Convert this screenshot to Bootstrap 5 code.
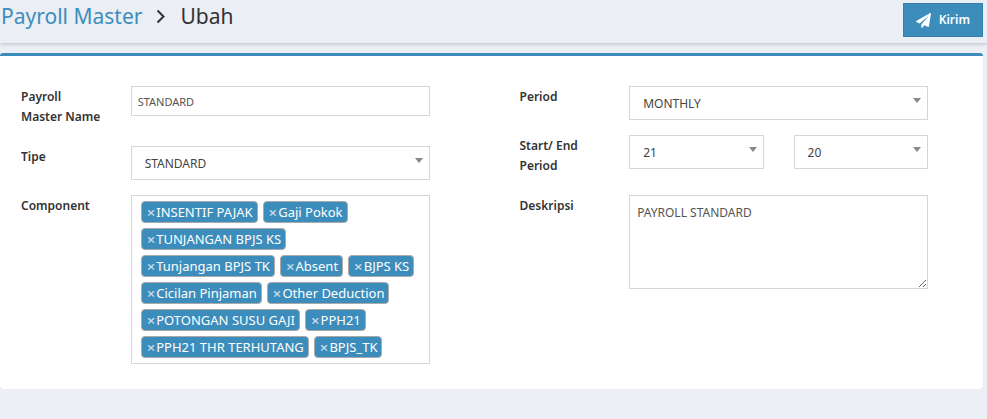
<!DOCTYPE html>
<html lang="id">
<head>
<meta charset="utf-8">
<meta name="viewport" content="width=device-width, initial-scale=1">
<title>Payroll Master - Ubah</title>
<link href="https://cdn.jsdelivr.net/npm/bootstrap@5.3.0/dist/css/bootstrap.min.css" rel="stylesheet">
<style>
:root { --brand: #3c8dbc; --brand-dark: #367fa9; --line: #d2d6de; }
body { background: #ecf0f5; color: #333; font-family: "Source Sans Pro", "Noto Sans", sans-serif; font-size: 12px; line-height: 20px; }
.page-head { background: #ebeef4; height: 43px; padding: 0 4px 0 1px; box-shadow: 0 1px 4px rgba(0, 0, 0, .2); }
.crumbs { font-size: 21px; line-height: 32px; gap: 14px; }
.crumbs a { color: var(--brand); }
.btn-send { --bs-btn-color: #fff; --bs-btn-bg: var(--brand); --bs-btn-border-color: var(--brand-dark); --bs-btn-hover-color: #fff; --bs-btn-hover-bg: var(--brand-dark); --bs-btn-border-radius: 0; --bs-btn-padding-x: 12px; --bs-btn-padding-y: 6px; --bs-btn-font-size: 12px; height: 34px; margin-top: 3px; font-weight: 600; line-height: 20px; }
.panel { background: #fff; border-top: 3px solid var(--brand); border-radius: 3px; box-shadow: 0 1px 1px rgba(0, 0, 0, .1); margin: 10px 4px 0 0; padding: 30px 55px 25px 21px; }
.halves { --bs-gutter-x: 90px; }
.field { --bs-gutter-x: 30px; margin-bottom: 15px; }
.field:last-child { margin-bottom: 0; }
.field label { font-weight: 600; padding-top: 1px; margin-bottom: 4px; }
.panel .form-control, .panel .form-select { border: 1px solid var(--line); border-radius: 0; color: #444; font-size: 12px; line-height: 20px; }
.panel input.form-control { height: 30px; padding: 4px 6px; font-size: 11px; color: #555; }
.panel .form-select { height: 34px; padding: 7px 24px 5px 13px; background: #fff url("data:image/svg+xml,%3Csvg xmlns='http://www.w3.org/2000/svg' viewBox='0 0 8 5'%3E%3Cpath fill='%23888' d='M0 0h8L4 5z'/%3E%3C/svg%3E") no-repeat right 6px top 11px / 8px 5px; }
.panel textarea.form-control { height: 94px; min-height: 94px; padding: 7px; color: #555; }
.tags { border: 1px solid var(--line); gap: 5px; padding: 5px 6px 5px 9px; }
.tag { background: var(--brand); border: 1px solid #aaa; border-radius: 4px; color: #fff; height: 22px; padding: 0 4px 0 5px; font-size: 13px; }
.tag button { background: none; border: 0; color: rgba(255, 255, 255, .7); font-size: 15px; font-weight: 600; padding: 0; margin-right: 1px; line-height: 18px; }
.tag-search { border: 0; outline: 0; width: 10px; padding: 0; }
</style>
</head>
<body>
<header class="page-head d-flex justify-content-between align-items-start position-relative">
  <nav class="crumbs d-flex align-items-center" aria-label="breadcrumb">
    <a href="#" class="text-decoration-none">Payroll Master</a>
    <svg width="10" height="16" viewBox="0 0 10 16" fill="none" stroke="#333" stroke-width="2" aria-hidden="true"><path d="M1.500 2.500 7.500 8.500l-6 6"/></svg>
    <span>Ubah</span>
  </nav>
  <button type="submit" form="payroll" class="btn btn-send d-flex align-items-center gap-2">
    <svg width="15" height="15" viewBox="0 0 1792 1792" fill="#fff" aria-hidden="true"><path d="M1764 11q33 24 27 64l-256 1536q-5 29-32 45-14 8-31 8-11 0-24-5l-453-185-242 295q-18 23-49 23-13 0-22-4-19-7-30.500-23.500t-11.500-36.500v-349l864-1059-1069 925-395-162q-37-14-40-55-2-40 32-59l1664-960q15-9 32-9 20 0 36 11z"/></svg>
    Kirim
  </button>
</header>
<main>
  <form id="payroll" class="panel">
    <div class="row halves">
      <div class="col-6">
        <div class="row field">
          <label class="col-3" for="name">Payroll Master&nbsp;Name</label>
          <div class="col-9"><input id="name" type="text" class="form-control" value="STANDARD"></div>
        </div>
        <div class="row field">
          <label class="col-3" for="type">Tipe</label>
          <div class="col-9"><select id="type" class="form-select"><option>STANDARD</option></select></div>
        </div>
        <div class="row field">
          <label class="col-3" for="component">Component</label>
          <div class="col-9">
            <div class="tags d-flex flex-wrap">
              <span class="tag d-flex"><button type="button" aria-label="Remove">×</button>INSENTIF PAJAK</span>
              <span class="tag d-flex"><button type="button" aria-label="Remove">×</button>Gaji Pokok</span>
              <span class="tag d-flex"><button type="button" aria-label="Remove">×</button>TUNJANGAN BPJS KS</span>
              <span class="tag d-flex"><button type="button" aria-label="Remove">×</button>Tunjangan BPJS TK</span>
              <span class="tag d-flex"><button type="button" aria-label="Remove">×</button>Absent</span>
              <span class="tag d-flex"><button type="button" aria-label="Remove">×</button>BJPS KS</span>
              <span class="tag d-flex"><button type="button" aria-label="Remove">×</button>Cicilan Pinjaman</span>
              <span class="tag d-flex"><button type="button" aria-label="Remove">×</button>Other Deduction</span>
              <span class="tag d-flex"><button type="button" aria-label="Remove">×</button>POTONGAN SUSU GAJI</span>
              <span class="tag d-flex"><button type="button" aria-label="Remove">×</button>PPH21</span>
              <span class="tag d-flex"><button type="button" aria-label="Remove">×</button>PPH21 THR TERHUTANG</span>
              <span class="tag d-flex"><button type="button" aria-label="Remove">×</button>BPJS_TK</span>
              <input id="component" type="text" class="tag-search">
            </div>
          </div>
        </div>
      </div>
      <div class="col-6">
        <div class="row field">
          <label class="col-3" for="period">Period</label>
          <div class="col-9"><select id="period" class="form-select"><option>MONTHLY</option></select></div>
        </div>
        <div class="row field">
          <label class="col-3" for="start">Start/ End Period</label>
          <div class="col-9">
            <div class="row field">
              <div class="col-6"><select id="start" class="form-select"><option>21</option></select></div>
              <div class="col-6"><select id="end" class="form-select" aria-label="End period"><option>20</option></select></div>
            </div>
          </div>
        </div>
        <div class="row field">
          <label class="col-3" for="description">Deskripsi</label>
          <div class="col-9"><textarea id="description" class="form-control">PAYROLL STANDARD</textarea></div>
        </div>
      </div>
    </div>
  </form>
</main>
<script src="https://cdn.jsdelivr.net/npm/bootstrap@5.3.0/dist/js/bootstrap.bundle.min.js"></script>
</body>
</html>
